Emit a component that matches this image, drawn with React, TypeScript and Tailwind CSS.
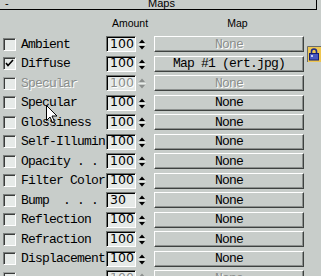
import React from "react";

type Row = {
  label: string;
  amount: string;
  map: string;
  checked?: boolean;
  disabled?: boolean;
  mapDisabled?: boolean;
};

const mono = "font-['Liberation_Mono',monospace] text-[13px] tracking-[-0.8px] whitespace-pre";
const sans = "font-['Liberation_Sans',Arial,sans-serif]";
const dim = "text-[#8a8e8c] [text-shadow:1px_1px_0_#ffffff]";

const rows: Row[] = [
  { label: "Ambient", amount: "100", map: "None", mapDisabled: true },
  { label: "Diffuse", amount: "100", map: "Map #1 (ert.jpg)", checked: true },
  { label: "Specular", amount: "100", map: "None", disabled: true, mapDisabled: true },
  { label: "Specular", amount: "100", map: "None" },
  { label: "Glossiness", amount: "100", map: "None" },
  { label: "Self-Illumin", amount: "100", map: "None" },
  { label: "Opacity . .", amount: "100", map: "None" },
  { label: "Filter Color", amount: "100", map: "None" },
  { label: "Bump  . . .", amount: "30", map: "None" },
  { label: "Reflection", amount: "100", map: "None" },
  { label: "Refraction", amount: "100", map: "None" },
  { label: "Displacement", amount: "100", map: "None" },
  { label: "", amount: "100", map: "None", disabled: true, mapDisabled: true },
];

function Checkbox({ checked, disabled }: { checked?: boolean; disabled?: boolean }) {
  return (
    <div
      className={`w-[13px] h-[13px] shrink-0 border-t border-l border-b border-r bg-[#e6eae8] ${
        disabled ? "border-t-[#a0a4a2] border-l-[#a0a4a2]" : "border-t-[#7a7e7c] border-l-[#7a7e7c]"
      } border-b-white border-r-white shadow-[inset_1px_1px_0_#3a3c3b]`}
    >
      {checked && (
        <svg width="11" height="11" viewBox="0 0 11 11" className="block">
          <path d="M2 5 L4 7.5 L9 2" stroke="#000" strokeWidth="1.6" fill="none" />
        </svg>
      )}
    </div>
  );
}

function Spinner({ value, disabled }: { value: string; disabled?: boolean }) {
  return (
    <div className="flex items-center shrink-0">
      <div
        className={`w-[30px] h-[16px] flex items-center pl-[3px] bg-[#e6eae8] border-t border-l border-[#6e726f] border-b border-r border-b-white border-r-white shadow-[inset_1px_1px_0_#000000] font-['DejaVu_Sans',sans-serif] text-[12.5px] leading-none ${
          disabled ? dim : "text-black"
        }`}
      >
        {value}
      </div>
      <svg width="10" height="16" viewBox="0 0 10 16" className="ml-[1px] block">
        <polygon points="2,7 8,7 5,3.5" fill={disabled ? "#8a8e8c" : "#000"} />
        <line x1="1" y1="8.5" x2="9" y2="8.5" stroke="#e8ece9" strokeWidth="1" />
        <polygon points="2,10 8,10 5,13.5" fill={disabled ? "#8a8e8c" : "#000"} />
      </svg>
    </div>
  );
}

function MapButton({ text, disabled }: { text: string; disabled?: boolean }) {
  return (
    <div
      className={`ml-[7px] w-[150px] h-[16px] shrink-0 flex items-center justify-center border-t border-l border-t-white border-l-white border-b border-r border-b-[#3e4240] border-r-[#3e4240] shadow-[inset_-1px_-1px_0_#8c908e] leading-none ${mono} ${
        disabled ? dim : "text-black"
      }`}
    >
      {text}
    </div>
  );
}

function MapRow({ row, tall }: { row: Row; tall: boolean }) {
  return (
    <div className={`flex items-center ${tall ? "h-[20px]" : "h-[19px]"}`}>
      <div className="ml-[3px]">
        <Checkbox checked={row.checked} disabled={row.disabled} />
      </div>
      <div className={`ml-[5px] w-[85px] shrink-0 leading-none ${mono} ${row.disabled ? dim : "text-black"}`}>
        {row.label}
      </div>
      <Spinner value={row.amount} disabled={row.disabled} />
      <MapButton text={row.map} disabled={row.mapDisabled} />
    </div>
  );
}

function LockIcon() {
  return (
    <svg width="14" height="16" viewBox="0 0 14 16" className="block">
      <rect x="0" y="0" width="14" height="16" fill="#eec652" />
      <path d="M0.5 16 V0.5 H14" stroke="#6a6c6a" strokeWidth="1" fill="none" />
      <path d="M4.5 8 V5.5 a2.5 2.5 0 0 1 5 0 V8" stroke="#1c2a8a" strokeWidth="1.6" fill="none" />
      <rect x="2.5" y="7.5" width="9" height="6.5" fill="#4858c0" stroke="#141e70" strokeWidth="1" />
      <rect x="4" y="9" width="2" height="2" fill="#c8d0f0" />
    </svg>
  );
}

export default function App() {
  return (
    <div className="w-[321px] h-[276px] overflow-hidden bg-[#c8cdca] relative select-none">
      {/* rollout title */}
      <div className="h-[10px] mr-[4px] border-b border-r border-black overflow-hidden flex items-start">
        <span className={`${sans} text-[11px] leading-none text-black -mt-[2px] ml-[5px] w-[12px]`}>-</span>
        <span className={`${sans} text-[11px] leading-none text-black -mt-[2px] flex-1 text-center pr-[10px]`}>
          Maps
        </span>
      </div>

      {/* column headers */}
      <div className={`flex h-[24px] items-center pt-[4px] ${sans} text-[10.5px] text-black`}>
        <div className="w-[106px]" />
        <div className="w-[48px] text-center">Amount</div>
        <div className="w-[150px] pl-[17px] text-center">Map</div>
      </div>

      {/* ambient + diffuse share the lock */}
      <div className="flex items-center">
        <div className="flex flex-col">
          <MapRow row={rows[0]} tall />
          <MapRow row={rows[1]} tall={false} />
        </div>
        <div className="ml-[3px]">
          <LockIcon />
        </div>
      </div>

      {rows.slice(2).map((row, i) => (
        <MapRow key={i} row={row} tall={i % 2 === 0} />
      ))}

      {/* mouse pointer */}
      <svg width="13" height="20" viewBox="0 0 13 20" className="absolute left-[46px] top-[105px]">
        <path d="M0.5 0.5 V15.5 L4 12 L6.5 17.5 L8.5 16.5 L6 11 H11 Z" fill="#fff" stroke="#000" strokeWidth="1" />
      </svg>
    </div>
  );
}
